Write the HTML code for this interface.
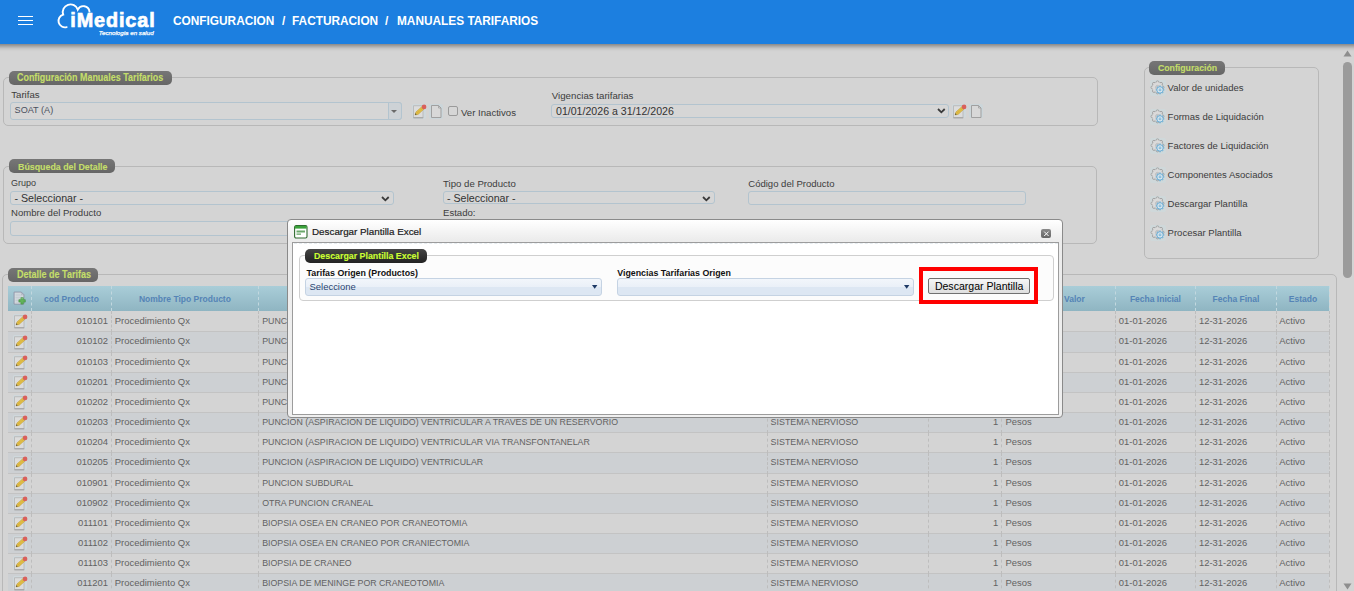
<!DOCTYPE html>
<html><head><meta charset="utf-8"><title>Manuales Tarifarios</title><style>
html,body{margin:0;padding:0;}
body{width:1354px;height:591px;overflow:hidden;position:relative;background:#d4d4d4;font-family:"Liberation Sans", sans-serif;}
.t{position:absolute;line-height:1;white-space:pre;}
.b{position:absolute;box-sizing:border-box;}
svg.b{overflow:visible;}
</style></head>
<body>
<div class="b" style="left:3.30px;top:77.40px;width:1094.50px;height:48.40px;border:1px solid #b8b8b8;border-radius:5px;"></div>
<div class="b" style="left:9.00px;top:71.00px;width:163.00px;height:14.00px;background:linear-gradient(#767676,#666666);border-radius:5px;"></div>
<div class="t" style="left:17.40px;top:72.83px;font-size:10.01px;color:#c4de6a;font-weight:bold;transform:scaleX(0.893);transform-origin:0 0;-webkit-text-stroke:0.15px #c4de6a;">Configuración Manuales Tarifarios</div>
<div class="t" style="left:11.30px;top:90.47px;font-size:9.6px;color:#3c3c3c;font-weight:normal;">Tarifas</div>
<div class="b" style="left:10.20px;top:102.20px;width:391.40px;height:17.40px;border:1px solid #b3c4cf;border-radius:3px;background:#d6d6d6;"></div>
<div class="b" style="left:387.70px;top:102.20px;width:13.90px;height:17.40px;border:1px solid #b3c4cf;border-radius:0 3px 3px 0;background:#cdd2d6;"></div>
<div class="b" style="left:391.2px;top:109.6px;width:0;height:0;border-left:3.6px solid transparent;border-right:3.6px solid transparent;border-top:3.6px solid #6a6a6a;"></div>
<div class="t" style="left:14.60px;top:106.20px;font-size:9.1px;color:#4a5060;font-weight:normal;">SOAT (A)</div>
<div class="b" style="left:411.5px;top:104px;width:14.5px;height:14.5px;background:#cfd8dc;border-radius:2px;"></div><svg class="b" style="left:411.5px;top:104px" width="15" height="15" viewBox="0 0 15 15"><rect x="1.6" y="1.8" width="9.4" height="11.8" fill="#dcdcdc" stroke="#b4b4b4" stroke-width="0.8"/><path d="M1.4 13.9 H11.2" stroke="#9c9c9c" stroke-width="0.9"/><path d="M3.1 10.9 L3.93 8.01 L10.93 1.71 L13.07 4.09 L6.07 10.39 Z" fill="#e2bf48" stroke="#b8962e" stroke-width="0.5"/><path d="M5 9.2 L12 2.9" stroke="#c49a2a" stroke-width="0.6" stroke-dasharray="1 0.8"/><path d="M3.1 10.9 L3.55 9.35 L4.65 10.35 Z" fill="#333"/><circle cx="12.1" cy="2.9" r="2.3" fill="#d9605c"/></svg>
<div class="b" style="left:428.5px;top:104px;width:14.5px;height:14.5px;background:#ccd6da;border-radius:2px;"></div><svg class="b" style="left:428.5px;top:104px" width="15" height="15" viewBox="0 0 15 15"><path d="M2.5 1.5 H9.5 L12 4 V13.5 H2.5 Z" fill="#d8d8d8" stroke="#a0a0a0" stroke-width="1"/><path d="M9.5 1.5 V4 H12" fill="none" stroke="#a0a0a0" stroke-width="0.8"/></svg>
<div class="b" style="left:448.00px;top:106.00px;width:9.60px;height:9.80px;border:1px solid #9a9a9a;border-radius:2px;background:#d6d6d6;"></div>
<div class="t" style="left:461.00px;top:107.87px;font-size:9.6px;color:#3c3c3c;font-weight:normal;">Ver Inactivos</div>
<div class="t" style="left:551.80px;top:90.69px;font-size:9.7px;color:#3c3c3c;font-weight:normal;">Vigencias tarifarias</div>
<div class="b" style="left:551.20px;top:104.20px;width:398.30px;height:13.70px;border:1px solid #b3c4cf;border-radius:3px;background:#d6d6d6;"></div>
<div class="t" style="left:556.00px;top:105.93px;font-size:10.6px;color:#333333;font-weight:normal;">01/01/2026 a 31/12/2026</div>
<svg class="b" style="left:936.7px;top:108.3px" width="8.7" height="5"><path d="M1 1 L4.35 4.3 L7.699999999999999 1" fill="none" stroke="#3a3a3a" stroke-width="1.8"/></svg>
<div class="b" style="left:951.5px;top:103.5px;width:14.5px;height:14.5px;background:#cfd8dc;border-radius:2px;"></div><svg class="b" style="left:951.5px;top:103.5px" width="15" height="15" viewBox="0 0 15 15"><rect x="1.6" y="1.8" width="9.4" height="11.8" fill="#dcdcdc" stroke="#b4b4b4" stroke-width="0.8"/><path d="M1.4 13.9 H11.2" stroke="#9c9c9c" stroke-width="0.9"/><path d="M3.1 10.9 L3.93 8.01 L10.93 1.71 L13.07 4.09 L6.07 10.39 Z" fill="#e2bf48" stroke="#b8962e" stroke-width="0.5"/><path d="M5 9.2 L12 2.9" stroke="#c49a2a" stroke-width="0.6" stroke-dasharray="1 0.8"/><path d="M3.1 10.9 L3.55 9.35 L4.65 10.35 Z" fill="#333"/><circle cx="12.1" cy="2.9" r="2.3" fill="#d9605c"/></svg>
<div class="b" style="left:968.5px;top:103.5px;width:14.5px;height:14.5px;background:#ccd6da;border-radius:2px;"></div><svg class="b" style="left:968.5px;top:103.5px" width="15" height="15" viewBox="0 0 15 15"><path d="M2.5 1.5 H9.5 L12 4 V13.5 H2.5 Z" fill="#d8d8d8" stroke="#a0a0a0" stroke-width="1"/><path d="M9.5 1.5 V4 H12" fill="none" stroke="#a0a0a0" stroke-width="0.8"/></svg>
<div class="b" style="left:3.40px;top:166.40px;width:1094.00px;height:77.60px;border:1px solid #b8b8b8;border-radius:5px;"></div>
<div class="b" style="left:9.30px;top:159.30px;width:105.70px;height:13.50px;background:linear-gradient(#767676,#666666);border-radius:5px;"></div>
<div class="t" style="left:17.80px;top:161.60px;font-size:9.92px;color:#c4de6a;font-weight:bold;transform:scaleX(0.893);transform-origin:0 0;-webkit-text-stroke:0.15px #c4de6a;">Búsqueda del Detalle</div>
<div class="t" style="left:11.00px;top:179.28px;font-size:9.0px;color:#3c3c3c;font-weight:normal;">Grupo</div>
<div class="b" style="left:10.20px;top:191.10px;width:383.60px;height:13.60px;border:1px solid #b3c4cf;border-radius:3px;background:#d6d6d6;"></div>
<div class="t" style="left:14.40px;top:192.57px;font-size:10.67px;color:#333333;font-weight:normal;">- Seleccionar -</div>
<svg class="b" style="left:380.6px;top:195.5px" width="8.7" height="5"><path d="M1 1 L4.35 4.3 L7.699999999999999 1" fill="none" stroke="#3a3a3a" stroke-width="1.8"/></svg>
<div class="t" style="left:11.00px;top:207.92px;font-size:9.55px;color:#3c3c3c;font-weight:normal;">Nombre del Producto</div>
<div class="b" style="left:10.20px;top:221.40px;width:389.80px;height:14.20px;border:1px solid #b3c4cf;border-radius:3px;background:#d6d6d6;"></div>
<div class="t" style="left:443.10px;top:179.27px;font-size:9.6px;color:#3c3c3c;font-weight:normal;">Tipo de Producto</div>
<div class="b" style="left:443.40px;top:191.30px;width:271.90px;height:13.20px;border:1px solid #b3c4cf;border-radius:3px;background:#d6d6d6;"></div>
<div class="t" style="left:446.90px;top:192.57px;font-size:10.67px;color:#333333;font-weight:normal;">- Seleccionar -</div>
<svg class="b" style="left:702px;top:195.5px" width="8.7" height="5"><path d="M1 1 L4.35 4.3 L7.699999999999999 1" fill="none" stroke="#3a3a3a" stroke-width="1.8"/></svg>
<div class="t" style="left:443.00px;top:207.77px;font-size:9.6px;color:#3c3c3c;font-weight:normal;">Estado:</div>
<div class="t" style="left:748.30px;top:179.14px;font-size:9.52px;color:#3c3c3c;font-weight:normal;">Código del Producto</div>
<div class="b" style="left:748.30px;top:190.60px;width:278.00px;height:14.60px;border:1px solid #b3c4cf;border-radius:3px;background:#d6d6d6;"></div>
<div class="b" style="left:1143.50px;top:67.40px;width:175.30px;height:191.20px;border:1px solid #b8b8b8;border-radius:5px;"></div>
<div class="b" style="left:1149.10px;top:61.30px;width:75.70px;height:13.50px;background:linear-gradient(#767676,#666666);border-radius:5px;"></div>
<div class="t" style="left:1157.60px;top:63.12px;font-size:9.78px;color:#c4de6a;font-weight:bold;transform:scaleX(0.893);transform-origin:0 0;-webkit-text-stroke:0.15px #c4de6a;">Configuración</div>
<div class="b" style="left:1150.3px;top:80.4px;width:15.5px;height:15.5px;background:#cfd8da;border-radius:2px;"></div><svg class="b" style="left:1150.3px;top:80.4px" width="16" height="16" viewBox="0 0 16 16"><g fill="#dadada" stroke="#989898" stroke-width="0.8"><circle cx="12.50" cy="7.40" r="1.5"/><circle cx="11.04" cy="10.94" r="1.5"/><circle cx="7.50" cy="12.40" r="1.5"/><circle cx="3.96" cy="10.94" r="1.5"/><circle cx="2.50" cy="7.40" r="1.5"/><circle cx="3.96" cy="3.86" r="1.5"/><circle cx="7.50" cy="2.40" r="1.5"/><circle cx="11.04" cy="3.86" r="1.5"/></g><circle cx="7.5" cy="7.4" r="4.9" fill="#dadada"/><circle cx="7.5" cy="7.4" r="2" fill="#d0d0d0" stroke="#b0b0b0" stroke-width="0.6"/><g stroke="#6eaed4" stroke-width="1.4"><line x1="10" y1="5.6" x2="10" y2="6.9" transform="rotate(0 10 9.9)"/><line x1="10" y1="5.6" x2="10" y2="6.9" transform="rotate(45 10 9.9)"/><line x1="10" y1="5.6" x2="10" y2="6.9" transform="rotate(90 10 9.9)"/><line x1="10" y1="5.6" x2="10" y2="6.9" transform="rotate(135 10 9.9)"/><line x1="10" y1="5.6" x2="10" y2="6.9" transform="rotate(180 10 9.9)"/><line x1="10" y1="5.6" x2="10" y2="6.9" transform="rotate(225 10 9.9)"/><line x1="10" y1="5.6" x2="10" y2="6.9" transform="rotate(270 10 9.9)"/><line x1="10" y1="5.6" x2="10" y2="6.9" transform="rotate(315 10 9.9)"/></g><circle cx="10" cy="9.9" r="3.2" fill="#dfeaf0" stroke="#6eaed4" stroke-width="1"/><rect x="9.1" y="9" width="1.8" height="1.8" fill="none" stroke="#6eaed4" stroke-width="0.7"/></svg>
<div class="t" style="left:1167.60px;top:82.94px;font-size:9.52px;color:#3c3c3c;font-weight:normal;">Valor de unidades</div>
<div class="b" style="left:1150.3px;top:109.4px;width:15.5px;height:15.5px;background:#cfd8da;border-radius:2px;"></div><svg class="b" style="left:1150.3px;top:109.4px" width="16" height="16" viewBox="0 0 16 16"><g fill="#dadada" stroke="#989898" stroke-width="0.8"><circle cx="12.50" cy="7.40" r="1.5"/><circle cx="11.04" cy="10.94" r="1.5"/><circle cx="7.50" cy="12.40" r="1.5"/><circle cx="3.96" cy="10.94" r="1.5"/><circle cx="2.50" cy="7.40" r="1.5"/><circle cx="3.96" cy="3.86" r="1.5"/><circle cx="7.50" cy="2.40" r="1.5"/><circle cx="11.04" cy="3.86" r="1.5"/></g><circle cx="7.5" cy="7.4" r="4.9" fill="#dadada"/><circle cx="7.5" cy="7.4" r="2" fill="#d0d0d0" stroke="#b0b0b0" stroke-width="0.6"/><g stroke="#6eaed4" stroke-width="1.4"><line x1="10" y1="5.6" x2="10" y2="6.9" transform="rotate(0 10 9.9)"/><line x1="10" y1="5.6" x2="10" y2="6.9" transform="rotate(45 10 9.9)"/><line x1="10" y1="5.6" x2="10" y2="6.9" transform="rotate(90 10 9.9)"/><line x1="10" y1="5.6" x2="10" y2="6.9" transform="rotate(135 10 9.9)"/><line x1="10" y1="5.6" x2="10" y2="6.9" transform="rotate(180 10 9.9)"/><line x1="10" y1="5.6" x2="10" y2="6.9" transform="rotate(225 10 9.9)"/><line x1="10" y1="5.6" x2="10" y2="6.9" transform="rotate(270 10 9.9)"/><line x1="10" y1="5.6" x2="10" y2="6.9" transform="rotate(315 10 9.9)"/></g><circle cx="10" cy="9.9" r="3.2" fill="#dfeaf0" stroke="#6eaed4" stroke-width="1"/><rect x="9.1" y="9" width="1.8" height="1.8" fill="none" stroke="#6eaed4" stroke-width="0.7"/></svg>
<div class="t" style="left:1167.60px;top:111.94px;font-size:9.52px;color:#3c3c3c;font-weight:normal;">Formas de Liquidación</div>
<div class="b" style="left:1150.3px;top:138.4px;width:15.5px;height:15.5px;background:#cfd8da;border-radius:2px;"></div><svg class="b" style="left:1150.3px;top:138.4px" width="16" height="16" viewBox="0 0 16 16"><g fill="#dadada" stroke="#989898" stroke-width="0.8"><circle cx="12.50" cy="7.40" r="1.5"/><circle cx="11.04" cy="10.94" r="1.5"/><circle cx="7.50" cy="12.40" r="1.5"/><circle cx="3.96" cy="10.94" r="1.5"/><circle cx="2.50" cy="7.40" r="1.5"/><circle cx="3.96" cy="3.86" r="1.5"/><circle cx="7.50" cy="2.40" r="1.5"/><circle cx="11.04" cy="3.86" r="1.5"/></g><circle cx="7.5" cy="7.4" r="4.9" fill="#dadada"/><circle cx="7.5" cy="7.4" r="2" fill="#d0d0d0" stroke="#b0b0b0" stroke-width="0.6"/><g stroke="#6eaed4" stroke-width="1.4"><line x1="10" y1="5.6" x2="10" y2="6.9" transform="rotate(0 10 9.9)"/><line x1="10" y1="5.6" x2="10" y2="6.9" transform="rotate(45 10 9.9)"/><line x1="10" y1="5.6" x2="10" y2="6.9" transform="rotate(90 10 9.9)"/><line x1="10" y1="5.6" x2="10" y2="6.9" transform="rotate(135 10 9.9)"/><line x1="10" y1="5.6" x2="10" y2="6.9" transform="rotate(180 10 9.9)"/><line x1="10" y1="5.6" x2="10" y2="6.9" transform="rotate(225 10 9.9)"/><line x1="10" y1="5.6" x2="10" y2="6.9" transform="rotate(270 10 9.9)"/><line x1="10" y1="5.6" x2="10" y2="6.9" transform="rotate(315 10 9.9)"/></g><circle cx="10" cy="9.9" r="3.2" fill="#dfeaf0" stroke="#6eaed4" stroke-width="1"/><rect x="9.1" y="9" width="1.8" height="1.8" fill="none" stroke="#6eaed4" stroke-width="0.7"/></svg>
<div class="t" style="left:1167.60px;top:140.94px;font-size:9.52px;color:#3c3c3c;font-weight:normal;">Factores de Liquidación</div>
<div class="b" style="left:1150.3px;top:167.4px;width:15.5px;height:15.5px;background:#cfd8da;border-radius:2px;"></div><svg class="b" style="left:1150.3px;top:167.4px" width="16" height="16" viewBox="0 0 16 16"><g fill="#dadada" stroke="#989898" stroke-width="0.8"><circle cx="12.50" cy="7.40" r="1.5"/><circle cx="11.04" cy="10.94" r="1.5"/><circle cx="7.50" cy="12.40" r="1.5"/><circle cx="3.96" cy="10.94" r="1.5"/><circle cx="2.50" cy="7.40" r="1.5"/><circle cx="3.96" cy="3.86" r="1.5"/><circle cx="7.50" cy="2.40" r="1.5"/><circle cx="11.04" cy="3.86" r="1.5"/></g><circle cx="7.5" cy="7.4" r="4.9" fill="#dadada"/><circle cx="7.5" cy="7.4" r="2" fill="#d0d0d0" stroke="#b0b0b0" stroke-width="0.6"/><g stroke="#6eaed4" stroke-width="1.4"><line x1="10" y1="5.6" x2="10" y2="6.9" transform="rotate(0 10 9.9)"/><line x1="10" y1="5.6" x2="10" y2="6.9" transform="rotate(45 10 9.9)"/><line x1="10" y1="5.6" x2="10" y2="6.9" transform="rotate(90 10 9.9)"/><line x1="10" y1="5.6" x2="10" y2="6.9" transform="rotate(135 10 9.9)"/><line x1="10" y1="5.6" x2="10" y2="6.9" transform="rotate(180 10 9.9)"/><line x1="10" y1="5.6" x2="10" y2="6.9" transform="rotate(225 10 9.9)"/><line x1="10" y1="5.6" x2="10" y2="6.9" transform="rotate(270 10 9.9)"/><line x1="10" y1="5.6" x2="10" y2="6.9" transform="rotate(315 10 9.9)"/></g><circle cx="10" cy="9.9" r="3.2" fill="#dfeaf0" stroke="#6eaed4" stroke-width="1"/><rect x="9.1" y="9" width="1.8" height="1.8" fill="none" stroke="#6eaed4" stroke-width="0.7"/></svg>
<div class="t" style="left:1167.60px;top:169.94px;font-size:9.52px;color:#3c3c3c;font-weight:normal;">Componentes Asociados</div>
<div class="b" style="left:1150.3px;top:196.4px;width:15.5px;height:15.5px;background:#cfd8da;border-radius:2px;"></div><svg class="b" style="left:1150.3px;top:196.4px" width="16" height="16" viewBox="0 0 16 16"><g fill="#dadada" stroke="#989898" stroke-width="0.8"><circle cx="12.50" cy="7.40" r="1.5"/><circle cx="11.04" cy="10.94" r="1.5"/><circle cx="7.50" cy="12.40" r="1.5"/><circle cx="3.96" cy="10.94" r="1.5"/><circle cx="2.50" cy="7.40" r="1.5"/><circle cx="3.96" cy="3.86" r="1.5"/><circle cx="7.50" cy="2.40" r="1.5"/><circle cx="11.04" cy="3.86" r="1.5"/></g><circle cx="7.5" cy="7.4" r="4.9" fill="#dadada"/><circle cx="7.5" cy="7.4" r="2" fill="#d0d0d0" stroke="#b0b0b0" stroke-width="0.6"/><g stroke="#6eaed4" stroke-width="1.4"><line x1="10" y1="5.6" x2="10" y2="6.9" transform="rotate(0 10 9.9)"/><line x1="10" y1="5.6" x2="10" y2="6.9" transform="rotate(45 10 9.9)"/><line x1="10" y1="5.6" x2="10" y2="6.9" transform="rotate(90 10 9.9)"/><line x1="10" y1="5.6" x2="10" y2="6.9" transform="rotate(135 10 9.9)"/><line x1="10" y1="5.6" x2="10" y2="6.9" transform="rotate(180 10 9.9)"/><line x1="10" y1="5.6" x2="10" y2="6.9" transform="rotate(225 10 9.9)"/><line x1="10" y1="5.6" x2="10" y2="6.9" transform="rotate(270 10 9.9)"/><line x1="10" y1="5.6" x2="10" y2="6.9" transform="rotate(315 10 9.9)"/></g><circle cx="10" cy="9.9" r="3.2" fill="#dfeaf0" stroke="#6eaed4" stroke-width="1"/><rect x="9.1" y="9" width="1.8" height="1.8" fill="none" stroke="#6eaed4" stroke-width="0.7"/></svg>
<div class="t" style="left:1167.60px;top:198.94px;font-size:9.52px;color:#3c3c3c;font-weight:normal;">Descargar Plantilla</div>
<div class="b" style="left:1150.3px;top:225.4px;width:15.5px;height:15.5px;background:#cfd8da;border-radius:2px;"></div><svg class="b" style="left:1150.3px;top:225.4px" width="16" height="16" viewBox="0 0 16 16"><g fill="#dadada" stroke="#989898" stroke-width="0.8"><circle cx="12.50" cy="7.40" r="1.5"/><circle cx="11.04" cy="10.94" r="1.5"/><circle cx="7.50" cy="12.40" r="1.5"/><circle cx="3.96" cy="10.94" r="1.5"/><circle cx="2.50" cy="7.40" r="1.5"/><circle cx="3.96" cy="3.86" r="1.5"/><circle cx="7.50" cy="2.40" r="1.5"/><circle cx="11.04" cy="3.86" r="1.5"/></g><circle cx="7.5" cy="7.4" r="4.9" fill="#dadada"/><circle cx="7.5" cy="7.4" r="2" fill="#d0d0d0" stroke="#b0b0b0" stroke-width="0.6"/><g stroke="#6eaed4" stroke-width="1.4"><line x1="10" y1="5.6" x2="10" y2="6.9" transform="rotate(0 10 9.9)"/><line x1="10" y1="5.6" x2="10" y2="6.9" transform="rotate(45 10 9.9)"/><line x1="10" y1="5.6" x2="10" y2="6.9" transform="rotate(90 10 9.9)"/><line x1="10" y1="5.6" x2="10" y2="6.9" transform="rotate(135 10 9.9)"/><line x1="10" y1="5.6" x2="10" y2="6.9" transform="rotate(180 10 9.9)"/><line x1="10" y1="5.6" x2="10" y2="6.9" transform="rotate(225 10 9.9)"/><line x1="10" y1="5.6" x2="10" y2="6.9" transform="rotate(270 10 9.9)"/><line x1="10" y1="5.6" x2="10" y2="6.9" transform="rotate(315 10 9.9)"/></g><circle cx="10" cy="9.9" r="3.2" fill="#dfeaf0" stroke="#6eaed4" stroke-width="1"/><rect x="9.1" y="9" width="1.8" height="1.8" fill="none" stroke="#6eaed4" stroke-width="0.7"/></svg>
<div class="t" style="left:1167.60px;top:227.94px;font-size:9.52px;color:#3c3c3c;font-weight:normal;">Procesar Plantilla</div>
<div class="b" style="left:2.30px;top:273.80px;width:1334.50px;height:426.20px;border:1px solid #b8b8b8;border-radius:5px;"></div>
<div class="b" style="left:7.90px;top:268.40px;width:89.90px;height:13.20px;background:linear-gradient(#767676,#666666);border-radius:5px;"></div>
<div class="t" style="left:16.50px;top:270.04px;font-size:10.11px;color:#c4de6a;font-weight:bold;transform:scaleX(0.893);transform-origin:0 0;-webkit-text-stroke:0.15px #c4de6a;">Detalle de Tarifas</div>
<div class="b" style="left:7.90px;top:285.80px;width:1321.50px;height:24.90px;background:linear-gradient(#a9cdd8,#8fb5c2);"></div>
<div class="b" style="left:31.00px;top:285.80px;width:1.00px;height:25.10px;border-left:1px dashed #c2d8df;"></div>
<div class="b" style="left:110.90px;top:285.80px;width:1.00px;height:25.10px;border-left:1px dashed #c2d8df;"></div>
<div class="b" style="left:258.00px;top:285.80px;width:1.00px;height:25.10px;border-left:1px dashed #c2d8df;"></div>
<div class="b" style="left:767.20px;top:285.80px;width:1.00px;height:25.10px;border-left:1px dashed #c2d8df;"></div>
<div class="b" style="left:927.80px;top:285.80px;width:1.00px;height:25.10px;border-left:1px dashed #c2d8df;"></div>
<div class="b" style="left:1001.00px;top:285.80px;width:1.00px;height:25.10px;border-left:1px dashed #c2d8df;"></div>
<div class="b" style="left:1115.00px;top:285.80px;width:1.00px;height:25.10px;border-left:1px dashed #c2d8df;"></div>
<div class="b" style="left:1194.90px;top:285.80px;width:1.00px;height:25.10px;border-left:1px dashed #c2d8df;"></div>
<div class="b" style="left:1276.00px;top:285.80px;width:1.00px;height:25.10px;border-left:1px dashed #c2d8df;"></div>
<div class="b" style="left:1328.90px;top:285.80px;width:1.00px;height:25.10px;border-left:1px dashed #c2d8df;"></div>
<div class="t" style="left:31.50px;width:79.90px;top:294.70px;font-size:8.5px;color:#5584b6;font-weight:bold;text-align:center">cod Producto</div>
<div class="t" style="left:111.40px;width:147.10px;top:294.70px;font-size:8.5px;color:#5584b6;font-weight:bold;text-align:center">Nombre Tipo Producto</div>
<div class="t" style="left:258.50px;width:509.20px;top:294.70px;font-size:8.5px;color:#5584b6;font-weight:bold;text-align:center">Nombre Producto</div>
<div class="t" style="left:767.70px;width:160.60px;top:294.70px;font-size:8.5px;color:#5584b6;font-weight:bold;text-align:center">Grupo</div>
<div class="t" style="left:928.30px;width:73.20px;top:294.70px;font-size:8.5px;color:#5584b6;font-weight:bold;text-align:center">Unidades</div>
<div class="t" style="left:950.00px;width:134.80px;top:294.70px;font-size:8.5px;color:#5584b6;font-weight:bold;text-align:right">Tipo Valor</div>
<div class="t" style="left:1115.50px;width:79.90px;top:294.70px;font-size:8.5px;color:#5584b6;font-weight:bold;text-align:center">Fecha Inicial</div>
<div class="t" style="left:1195.40px;width:81.10px;top:294.70px;font-size:8.5px;color:#5584b6;font-weight:bold;text-align:center">Fecha Final</div>
<div class="t" style="left:1276.50px;width:52.90px;top:294.70px;font-size:8.5px;color:#5584b6;font-weight:bold;text-align:center">Estado</div>
<svg class="b" style="left:12.9px;top:290.9px" width="15" height="15" viewBox="0 0 15 15"><path d="M1.1 1.1 H8.3 L10.9 3.7 V13.1 H1.1 Z" fill="#d8dfe2" stroke="#8e93a6" stroke-width="0.9"/><path d="M8.3 1.1 V3.7 H10.9" fill="none" stroke="#9aa0b0" stroke-width="0.6"/><g stroke="#b6bcc8" stroke-width="0.6"><line x1="2.4" y1="3.2" x2="7.5" y2="3.2"/><line x1="2.4" y1="4.8" x2="9.5" y2="4.8"/><line x1="2.4" y1="6.4" x2="9.5" y2="6.4"/><line x1="2.4" y1="8" x2="7" y2="8"/><line x1="2.4" y1="9.6" x2="6" y2="9.6"/><line x1="2.4" y1="11.2" x2="6" y2="11.2"/></g><path d="M7.9 6.7 H10.3 V8.7 H12.3 V11.1 H10.3 V13.1 H7.9 V11.1 H5.9 V8.7 H7.9 Z" fill="#62b35a" stroke="#3f8f3f" stroke-width="0.6"/><path d="M8.5 7.5 H9.7" stroke="#a8dca0" stroke-width="0.6"/></svg>
<div class="b" style="left:7.90px;top:310.70px;width:1321.50px;height:21.30px;background:#d4d4d4;border-bottom:1px solid #c3c3c3;"></div>
<div class="b" style="left:31.00px;top:310.70px;width:1.00px;height:21.30px;border-left:1px dashed #bdbdbd;"></div>
<div class="b" style="left:110.90px;top:310.70px;width:1.00px;height:21.30px;border-left:1px dashed #bdbdbd;"></div>
<div class="b" style="left:258.00px;top:310.70px;width:1.00px;height:21.30px;border-left:1px dashed #bdbdbd;"></div>
<div class="b" style="left:767.20px;top:310.70px;width:1.00px;height:21.30px;border-left:1px dashed #bdbdbd;"></div>
<div class="b" style="left:927.80px;top:310.70px;width:1.00px;height:21.30px;border-left:1px dashed #bdbdbd;"></div>
<div class="b" style="left:1001.00px;top:310.70px;width:1.00px;height:21.30px;border-left:1px dashed #bdbdbd;"></div>
<div class="b" style="left:1115.00px;top:310.70px;width:1.00px;height:21.30px;border-left:1px dashed #bdbdbd;"></div>
<div class="b" style="left:1194.90px;top:310.70px;width:1.00px;height:21.30px;border-left:1px dashed #bdbdbd;"></div>
<div class="b" style="left:1276.00px;top:310.70px;width:1.00px;height:21.30px;border-left:1px dashed #bdbdbd;"></div>
<div class="b" style="left:1328.90px;top:310.70px;width:1.00px;height:21.30px;border-left:1px dashed #bdbdbd;"></div>
<div class="b" style="left:12.6px;top:313.7px;width:14.5px;height:14.5px;background:#cfd8dc;border-radius:2px;"></div><svg class="b" style="left:12.6px;top:313.7px" width="15" height="15" viewBox="0 0 15 15"><rect x="1.6" y="1.8" width="9.4" height="11.8" fill="#dcdcdc" stroke="#b4b4b4" stroke-width="0.8"/><path d="M1.4 13.9 H11.2" stroke="#9c9c9c" stroke-width="0.9"/><path d="M3.1 10.9 L3.93 8.01 L10.93 1.71 L13.07 4.09 L6.07 10.39 Z" fill="#e2bf48" stroke="#b8962e" stroke-width="0.5"/><path d="M5 9.2 L12 2.9" stroke="#c49a2a" stroke-width="0.6" stroke-dasharray="1 0.8"/><path d="M3.1 10.9 L3.55 9.35 L4.65 10.35 Z" fill="#333"/><circle cx="12.1" cy="2.9" r="2.3" fill="#d9605c"/></svg>
<div class="t" style="left:31.50px;width:76.50px;top:316.10px;font-size:9.45px;color:#626262;font-weight:normal;text-align:right">010101</div>
<div class="t" style="left:114.80px;top:316.09px;font-size:9.46px;color:#626262;font-weight:normal;">Procedimiento Qx</div>
<div class="t" style="left:262.20px;top:316.65px;font-size:8.8px;color:#626262;font-weight:normal;">PUNCION CISTERNAL</div>
<div class="t" style="left:770.60px;top:316.57px;font-size:8.9px;color:#626262;font-weight:normal;">SISTEMA NERVIOSO</div>
<div class="t" style="left:928.30px;width:70.00px;top:316.10px;font-size:9.45px;color:#626262;font-weight:normal;text-align:right">1</div>
<div class="t" style="left:1005.50px;top:316.10px;font-size:9.45px;color:#626262;font-weight:normal;">Pesos</div>
<div class="t" style="left:1118.80px;top:316.10px;font-size:9.45px;color:#626262;font-weight:normal;">01-01-2026</div>
<div class="t" style="left:1198.90px;top:316.10px;font-size:9.45px;color:#626262;font-weight:normal;">12-31-2026</div>
<div class="t" style="left:1279.30px;top:316.10px;font-size:9.45px;color:#626262;font-weight:normal;">Activo</div>
<div class="b" style="left:7.90px;top:332.00px;width:1321.50px;height:21.00px;background:#cdd0d3;border-bottom:1px solid #c3c3c3;"></div>
<div class="b" style="left:31.00px;top:332.00px;width:1.00px;height:21.00px;border-left:1px dashed #bdbdbd;"></div>
<div class="b" style="left:110.90px;top:332.00px;width:1.00px;height:21.00px;border-left:1px dashed #bdbdbd;"></div>
<div class="b" style="left:258.00px;top:332.00px;width:1.00px;height:21.00px;border-left:1px dashed #bdbdbd;"></div>
<div class="b" style="left:767.20px;top:332.00px;width:1.00px;height:21.00px;border-left:1px dashed #bdbdbd;"></div>
<div class="b" style="left:927.80px;top:332.00px;width:1.00px;height:21.00px;border-left:1px dashed #bdbdbd;"></div>
<div class="b" style="left:1001.00px;top:332.00px;width:1.00px;height:21.00px;border-left:1px dashed #bdbdbd;"></div>
<div class="b" style="left:1115.00px;top:332.00px;width:1.00px;height:21.00px;border-left:1px dashed #bdbdbd;"></div>
<div class="b" style="left:1194.90px;top:332.00px;width:1.00px;height:21.00px;border-left:1px dashed #bdbdbd;"></div>
<div class="b" style="left:1276.00px;top:332.00px;width:1.00px;height:21.00px;border-left:1px dashed #bdbdbd;"></div>
<div class="b" style="left:1328.90px;top:332.00px;width:1.00px;height:21.00px;border-left:1px dashed #bdbdbd;"></div>
<div class="b" style="left:12.6px;top:334.7px;width:14.5px;height:14.5px;background:#cfd8dc;border-radius:2px;"></div><svg class="b" style="left:12.6px;top:334.7px" width="15" height="15" viewBox="0 0 15 15"><rect x="1.6" y="1.8" width="9.4" height="11.8" fill="#dcdcdc" stroke="#b4b4b4" stroke-width="0.8"/><path d="M1.4 13.9 H11.2" stroke="#9c9c9c" stroke-width="0.9"/><path d="M3.1 10.9 L3.93 8.01 L10.93 1.71 L13.07 4.09 L6.07 10.39 Z" fill="#e2bf48" stroke="#b8962e" stroke-width="0.5"/><path d="M5 9.2 L12 2.9" stroke="#c49a2a" stroke-width="0.6" stroke-dasharray="1 0.8"/><path d="M3.1 10.9 L3.55 9.35 L4.65 10.35 Z" fill="#333"/><circle cx="12.1" cy="2.9" r="2.3" fill="#d9605c"/></svg>
<div class="t" style="left:31.50px;width:76.50px;top:336.10px;font-size:9.45px;color:#626262;font-weight:normal;text-align:right">010102</div>
<div class="t" style="left:114.80px;top:336.09px;font-size:9.46px;color:#626262;font-weight:normal;">Procedimiento Qx</div>
<div class="t" style="left:262.20px;top:336.65px;font-size:8.8px;color:#626262;font-weight:normal;">PUNCION VENTRICULAR A TRAVES DE CATETER PERMANENTE</div>
<div class="t" style="left:770.60px;top:336.57px;font-size:8.9px;color:#626262;font-weight:normal;">SISTEMA NERVIOSO</div>
<div class="t" style="left:928.30px;width:70.00px;top:336.10px;font-size:9.45px;color:#626262;font-weight:normal;text-align:right">1</div>
<div class="t" style="left:1005.50px;top:336.10px;font-size:9.45px;color:#626262;font-weight:normal;">Pesos</div>
<div class="t" style="left:1118.80px;top:336.10px;font-size:9.45px;color:#626262;font-weight:normal;">01-01-2026</div>
<div class="t" style="left:1198.90px;top:336.10px;font-size:9.45px;color:#626262;font-weight:normal;">12-31-2026</div>
<div class="t" style="left:1279.30px;top:336.10px;font-size:9.45px;color:#626262;font-weight:normal;">Activo</div>
<div class="b" style="left:7.90px;top:353.00px;width:1321.50px;height:20.00px;background:#d4d4d4;border-bottom:1px solid #c3c3c3;"></div>
<div class="b" style="left:31.00px;top:353.00px;width:1.00px;height:20.00px;border-left:1px dashed #bdbdbd;"></div>
<div class="b" style="left:110.90px;top:353.00px;width:1.00px;height:20.00px;border-left:1px dashed #bdbdbd;"></div>
<div class="b" style="left:258.00px;top:353.00px;width:1.00px;height:20.00px;border-left:1px dashed #bdbdbd;"></div>
<div class="b" style="left:767.20px;top:353.00px;width:1.00px;height:20.00px;border-left:1px dashed #bdbdbd;"></div>
<div class="b" style="left:927.80px;top:353.00px;width:1.00px;height:20.00px;border-left:1px dashed #bdbdbd;"></div>
<div class="b" style="left:1001.00px;top:353.00px;width:1.00px;height:20.00px;border-left:1px dashed #bdbdbd;"></div>
<div class="b" style="left:1115.00px;top:353.00px;width:1.00px;height:20.00px;border-left:1px dashed #bdbdbd;"></div>
<div class="b" style="left:1194.90px;top:353.00px;width:1.00px;height:20.00px;border-left:1px dashed #bdbdbd;"></div>
<div class="b" style="left:1276.00px;top:353.00px;width:1.00px;height:20.00px;border-left:1px dashed #bdbdbd;"></div>
<div class="b" style="left:1328.90px;top:353.00px;width:1.00px;height:20.00px;border-left:1px dashed #bdbdbd;"></div>
<div class="b" style="left:12.6px;top:354.7px;width:14.5px;height:14.5px;background:#cfd8dc;border-radius:2px;"></div><svg class="b" style="left:12.6px;top:354.7px" width="15" height="15" viewBox="0 0 15 15"><rect x="1.6" y="1.8" width="9.4" height="11.8" fill="#dcdcdc" stroke="#b4b4b4" stroke-width="0.8"/><path d="M1.4 13.9 H11.2" stroke="#9c9c9c" stroke-width="0.9"/><path d="M3.1 10.9 L3.93 8.01 L10.93 1.71 L13.07 4.09 L6.07 10.39 Z" fill="#e2bf48" stroke="#b8962e" stroke-width="0.5"/><path d="M5 9.2 L12 2.9" stroke="#c49a2a" stroke-width="0.6" stroke-dasharray="1 0.8"/><path d="M3.1 10.9 L3.55 9.35 L4.65 10.35 Z" fill="#333"/><circle cx="12.1" cy="2.9" r="2.3" fill="#d9605c"/></svg>
<div class="t" style="left:31.50px;width:76.50px;top:357.10px;font-size:9.45px;color:#626262;font-weight:normal;text-align:right">010103</div>
<div class="t" style="left:114.80px;top:357.09px;font-size:9.46px;color:#626262;font-weight:normal;">Procedimiento Qx</div>
<div class="t" style="left:262.20px;top:357.65px;font-size:8.8px;color:#626262;font-weight:normal;">PUNCION LUMBAR</div>
<div class="t" style="left:770.60px;top:357.57px;font-size:8.9px;color:#626262;font-weight:normal;">SISTEMA NERVIOSO</div>
<div class="t" style="left:928.30px;width:70.00px;top:357.10px;font-size:9.45px;color:#626262;font-weight:normal;text-align:right">1</div>
<div class="t" style="left:1005.50px;top:357.10px;font-size:9.45px;color:#626262;font-weight:normal;">Pesos</div>
<div class="t" style="left:1118.80px;top:357.10px;font-size:9.45px;color:#626262;font-weight:normal;">01-01-2026</div>
<div class="t" style="left:1198.90px;top:357.10px;font-size:9.45px;color:#626262;font-weight:normal;">12-31-2026</div>
<div class="t" style="left:1279.30px;top:357.10px;font-size:9.45px;color:#626262;font-weight:normal;">Activo</div>
<div class="b" style="left:7.90px;top:373.00px;width:1321.50px;height:20.00px;background:#cdd0d3;border-bottom:1px solid #c3c3c3;"></div>
<div class="b" style="left:31.00px;top:373.00px;width:1.00px;height:20.00px;border-left:1px dashed #bdbdbd;"></div>
<div class="b" style="left:110.90px;top:373.00px;width:1.00px;height:20.00px;border-left:1px dashed #bdbdbd;"></div>
<div class="b" style="left:258.00px;top:373.00px;width:1.00px;height:20.00px;border-left:1px dashed #bdbdbd;"></div>
<div class="b" style="left:767.20px;top:373.00px;width:1.00px;height:20.00px;border-left:1px dashed #bdbdbd;"></div>
<div class="b" style="left:927.80px;top:373.00px;width:1.00px;height:20.00px;border-left:1px dashed #bdbdbd;"></div>
<div class="b" style="left:1001.00px;top:373.00px;width:1.00px;height:20.00px;border-left:1px dashed #bdbdbd;"></div>
<div class="b" style="left:1115.00px;top:373.00px;width:1.00px;height:20.00px;border-left:1px dashed #bdbdbd;"></div>
<div class="b" style="left:1194.90px;top:373.00px;width:1.00px;height:20.00px;border-left:1px dashed #bdbdbd;"></div>
<div class="b" style="left:1276.00px;top:373.00px;width:1.00px;height:20.00px;border-left:1px dashed #bdbdbd;"></div>
<div class="b" style="left:1328.90px;top:373.00px;width:1.00px;height:20.00px;border-left:1px dashed #bdbdbd;"></div>
<div class="b" style="left:12.6px;top:374.7px;width:14.5px;height:14.5px;background:#cfd8dc;border-radius:2px;"></div><svg class="b" style="left:12.6px;top:374.7px" width="15" height="15" viewBox="0 0 15 15"><rect x="1.6" y="1.8" width="9.4" height="11.8" fill="#dcdcdc" stroke="#b4b4b4" stroke-width="0.8"/><path d="M1.4 13.9 H11.2" stroke="#9c9c9c" stroke-width="0.9"/><path d="M3.1 10.9 L3.93 8.01 L10.93 1.71 L13.07 4.09 L6.07 10.39 Z" fill="#e2bf48" stroke="#b8962e" stroke-width="0.5"/><path d="M5 9.2 L12 2.9" stroke="#c49a2a" stroke-width="0.6" stroke-dasharray="1 0.8"/><path d="M3.1 10.9 L3.55 9.35 L4.65 10.35 Z" fill="#333"/><circle cx="12.1" cy="2.9" r="2.3" fill="#d9605c"/></svg>
<div class="t" style="left:31.50px;width:76.50px;top:377.10px;font-size:9.45px;color:#626262;font-weight:normal;text-align:right">010201</div>
<div class="t" style="left:114.80px;top:377.09px;font-size:9.46px;color:#626262;font-weight:normal;">Procedimiento Qx</div>
<div class="t" style="left:262.20px;top:377.65px;font-size:8.8px;color:#626262;font-weight:normal;">PUNCION DE FONTANELA</div>
<div class="t" style="left:770.60px;top:377.57px;font-size:8.9px;color:#626262;font-weight:normal;">SISTEMA NERVIOSO</div>
<div class="t" style="left:928.30px;width:70.00px;top:377.10px;font-size:9.45px;color:#626262;font-weight:normal;text-align:right">1</div>
<div class="t" style="left:1005.50px;top:377.10px;font-size:9.45px;color:#626262;font-weight:normal;">Pesos</div>
<div class="t" style="left:1118.80px;top:377.10px;font-size:9.45px;color:#626262;font-weight:normal;">01-01-2026</div>
<div class="t" style="left:1198.90px;top:377.10px;font-size:9.45px;color:#626262;font-weight:normal;">12-31-2026</div>
<div class="t" style="left:1279.30px;top:377.10px;font-size:9.45px;color:#626262;font-weight:normal;">Activo</div>
<div class="b" style="left:7.90px;top:393.00px;width:1321.50px;height:20.00px;background:#d4d4d4;border-bottom:1px solid #c3c3c3;"></div>
<div class="b" style="left:31.00px;top:393.00px;width:1.00px;height:20.00px;border-left:1px dashed #bdbdbd;"></div>
<div class="b" style="left:110.90px;top:393.00px;width:1.00px;height:20.00px;border-left:1px dashed #bdbdbd;"></div>
<div class="b" style="left:258.00px;top:393.00px;width:1.00px;height:20.00px;border-left:1px dashed #bdbdbd;"></div>
<div class="b" style="left:767.20px;top:393.00px;width:1.00px;height:20.00px;border-left:1px dashed #bdbdbd;"></div>
<div class="b" style="left:927.80px;top:393.00px;width:1.00px;height:20.00px;border-left:1px dashed #bdbdbd;"></div>
<div class="b" style="left:1001.00px;top:393.00px;width:1.00px;height:20.00px;border-left:1px dashed #bdbdbd;"></div>
<div class="b" style="left:1115.00px;top:393.00px;width:1.00px;height:20.00px;border-left:1px dashed #bdbdbd;"></div>
<div class="b" style="left:1194.90px;top:393.00px;width:1.00px;height:20.00px;border-left:1px dashed #bdbdbd;"></div>
<div class="b" style="left:1276.00px;top:393.00px;width:1.00px;height:20.00px;border-left:1px dashed #bdbdbd;"></div>
<div class="b" style="left:1328.90px;top:393.00px;width:1.00px;height:20.00px;border-left:1px dashed #bdbdbd;"></div>
<div class="b" style="left:12.6px;top:394.7px;width:14.5px;height:14.5px;background:#cfd8dc;border-radius:2px;"></div><svg class="b" style="left:12.6px;top:394.7px" width="15" height="15" viewBox="0 0 15 15"><rect x="1.6" y="1.8" width="9.4" height="11.8" fill="#dcdcdc" stroke="#b4b4b4" stroke-width="0.8"/><path d="M1.4 13.9 H11.2" stroke="#9c9c9c" stroke-width="0.9"/><path d="M3.1 10.9 L3.93 8.01 L10.93 1.71 L13.07 4.09 L6.07 10.39 Z" fill="#e2bf48" stroke="#b8962e" stroke-width="0.5"/><path d="M5 9.2 L12 2.9" stroke="#c49a2a" stroke-width="0.6" stroke-dasharray="1 0.8"/><path d="M3.1 10.9 L3.55 9.35 L4.65 10.35 Z" fill="#333"/><circle cx="12.1" cy="2.9" r="2.3" fill="#d9605c"/></svg>
<div class="t" style="left:31.50px;width:76.50px;top:397.10px;font-size:9.45px;color:#626262;font-weight:normal;text-align:right">010202</div>
<div class="t" style="left:114.80px;top:397.09px;font-size:9.46px;color:#626262;font-weight:normal;">Procedimiento Qx</div>
<div class="t" style="left:262.20px;top:397.65px;font-size:8.8px;color:#626262;font-weight:normal;">PUNCION SUBOCCIPITAL</div>
<div class="t" style="left:770.60px;top:397.57px;font-size:8.9px;color:#626262;font-weight:normal;">SISTEMA NERVIOSO</div>
<div class="t" style="left:928.30px;width:70.00px;top:397.10px;font-size:9.45px;color:#626262;font-weight:normal;text-align:right">1</div>
<div class="t" style="left:1005.50px;top:397.10px;font-size:9.45px;color:#626262;font-weight:normal;">Pesos</div>
<div class="t" style="left:1118.80px;top:397.10px;font-size:9.45px;color:#626262;font-weight:normal;">01-01-2026</div>
<div class="t" style="left:1198.90px;top:397.10px;font-size:9.45px;color:#626262;font-weight:normal;">12-31-2026</div>
<div class="t" style="left:1279.30px;top:397.10px;font-size:9.45px;color:#626262;font-weight:normal;">Activo</div>
<div class="b" style="left:7.90px;top:413.00px;width:1321.50px;height:20.00px;background:#cdd0d3;border-bottom:1px solid #c3c3c3;"></div>
<div class="b" style="left:31.00px;top:413.00px;width:1.00px;height:20.00px;border-left:1px dashed #bdbdbd;"></div>
<div class="b" style="left:110.90px;top:413.00px;width:1.00px;height:20.00px;border-left:1px dashed #bdbdbd;"></div>
<div class="b" style="left:258.00px;top:413.00px;width:1.00px;height:20.00px;border-left:1px dashed #bdbdbd;"></div>
<div class="b" style="left:767.20px;top:413.00px;width:1.00px;height:20.00px;border-left:1px dashed #bdbdbd;"></div>
<div class="b" style="left:927.80px;top:413.00px;width:1.00px;height:20.00px;border-left:1px dashed #bdbdbd;"></div>
<div class="b" style="left:1001.00px;top:413.00px;width:1.00px;height:20.00px;border-left:1px dashed #bdbdbd;"></div>
<div class="b" style="left:1115.00px;top:413.00px;width:1.00px;height:20.00px;border-left:1px dashed #bdbdbd;"></div>
<div class="b" style="left:1194.90px;top:413.00px;width:1.00px;height:20.00px;border-left:1px dashed #bdbdbd;"></div>
<div class="b" style="left:1276.00px;top:413.00px;width:1.00px;height:20.00px;border-left:1px dashed #bdbdbd;"></div>
<div class="b" style="left:1328.90px;top:413.00px;width:1.00px;height:20.00px;border-left:1px dashed #bdbdbd;"></div>
<div class="b" style="left:12.6px;top:414.7px;width:14.5px;height:14.5px;background:#cfd8dc;border-radius:2px;"></div><svg class="b" style="left:12.6px;top:414.7px" width="15" height="15" viewBox="0 0 15 15"><rect x="1.6" y="1.8" width="9.4" height="11.8" fill="#dcdcdc" stroke="#b4b4b4" stroke-width="0.8"/><path d="M1.4 13.9 H11.2" stroke="#9c9c9c" stroke-width="0.9"/><path d="M3.1 10.9 L3.93 8.01 L10.93 1.71 L13.07 4.09 L6.07 10.39 Z" fill="#e2bf48" stroke="#b8962e" stroke-width="0.5"/><path d="M5 9.2 L12 2.9" stroke="#c49a2a" stroke-width="0.6" stroke-dasharray="1 0.8"/><path d="M3.1 10.9 L3.55 9.35 L4.65 10.35 Z" fill="#333"/><circle cx="12.1" cy="2.9" r="2.3" fill="#d9605c"/></svg>
<div class="t" style="left:31.50px;width:76.50px;top:417.10px;font-size:9.45px;color:#626262;font-weight:normal;text-align:right">010203</div>
<div class="t" style="left:114.80px;top:417.09px;font-size:9.46px;color:#626262;font-weight:normal;">Procedimiento Qx</div>
<div class="t" style="left:262.20px;top:417.65px;font-size:8.8px;color:#626262;font-weight:normal;">PUNCION (ASPIRACION DE LIQUIDO) VENTRICULAR A TRAVES DE UN RESERVORIO</div>
<div class="t" style="left:770.60px;top:417.57px;font-size:8.9px;color:#626262;font-weight:normal;">SISTEMA NERVIOSO</div>
<div class="t" style="left:928.30px;width:70.00px;top:417.10px;font-size:9.45px;color:#626262;font-weight:normal;text-align:right">1</div>
<div class="t" style="left:1005.50px;top:417.10px;font-size:9.45px;color:#626262;font-weight:normal;">Pesos</div>
<div class="t" style="left:1118.80px;top:417.10px;font-size:9.45px;color:#626262;font-weight:normal;">01-01-2026</div>
<div class="t" style="left:1198.90px;top:417.10px;font-size:9.45px;color:#626262;font-weight:normal;">12-31-2026</div>
<div class="t" style="left:1279.30px;top:417.10px;font-size:9.45px;color:#626262;font-weight:normal;">Activo</div>
<div class="b" style="left:7.90px;top:433.00px;width:1321.50px;height:20.00px;background:#d4d4d4;border-bottom:1px solid #c3c3c3;"></div>
<div class="b" style="left:31.00px;top:433.00px;width:1.00px;height:20.00px;border-left:1px dashed #bdbdbd;"></div>
<div class="b" style="left:110.90px;top:433.00px;width:1.00px;height:20.00px;border-left:1px dashed #bdbdbd;"></div>
<div class="b" style="left:258.00px;top:433.00px;width:1.00px;height:20.00px;border-left:1px dashed #bdbdbd;"></div>
<div class="b" style="left:767.20px;top:433.00px;width:1.00px;height:20.00px;border-left:1px dashed #bdbdbd;"></div>
<div class="b" style="left:927.80px;top:433.00px;width:1.00px;height:20.00px;border-left:1px dashed #bdbdbd;"></div>
<div class="b" style="left:1001.00px;top:433.00px;width:1.00px;height:20.00px;border-left:1px dashed #bdbdbd;"></div>
<div class="b" style="left:1115.00px;top:433.00px;width:1.00px;height:20.00px;border-left:1px dashed #bdbdbd;"></div>
<div class="b" style="left:1194.90px;top:433.00px;width:1.00px;height:20.00px;border-left:1px dashed #bdbdbd;"></div>
<div class="b" style="left:1276.00px;top:433.00px;width:1.00px;height:20.00px;border-left:1px dashed #bdbdbd;"></div>
<div class="b" style="left:1328.90px;top:433.00px;width:1.00px;height:20.00px;border-left:1px dashed #bdbdbd;"></div>
<div class="b" style="left:12.6px;top:434.7px;width:14.5px;height:14.5px;background:#cfd8dc;border-radius:2px;"></div><svg class="b" style="left:12.6px;top:434.7px" width="15" height="15" viewBox="0 0 15 15"><rect x="1.6" y="1.8" width="9.4" height="11.8" fill="#dcdcdc" stroke="#b4b4b4" stroke-width="0.8"/><path d="M1.4 13.9 H11.2" stroke="#9c9c9c" stroke-width="0.9"/><path d="M3.1 10.9 L3.93 8.01 L10.93 1.71 L13.07 4.09 L6.07 10.39 Z" fill="#e2bf48" stroke="#b8962e" stroke-width="0.5"/><path d="M5 9.2 L12 2.9" stroke="#c49a2a" stroke-width="0.6" stroke-dasharray="1 0.8"/><path d="M3.1 10.9 L3.55 9.35 L4.65 10.35 Z" fill="#333"/><circle cx="12.1" cy="2.9" r="2.3" fill="#d9605c"/></svg>
<div class="t" style="left:31.50px;width:76.50px;top:437.10px;font-size:9.45px;color:#626262;font-weight:normal;text-align:right">010204</div>
<div class="t" style="left:114.80px;top:437.09px;font-size:9.46px;color:#626262;font-weight:normal;">Procedimiento Qx</div>
<div class="t" style="left:262.20px;top:437.65px;font-size:8.8px;color:#626262;font-weight:normal;">PUNCION (ASPIRACION DE LIQUIDO) VENTRICULAR VIA TRANSFONTANELAR</div>
<div class="t" style="left:770.60px;top:437.57px;font-size:8.9px;color:#626262;font-weight:normal;">SISTEMA NERVIOSO</div>
<div class="t" style="left:928.30px;width:70.00px;top:437.10px;font-size:9.45px;color:#626262;font-weight:normal;text-align:right">1</div>
<div class="t" style="left:1005.50px;top:437.10px;font-size:9.45px;color:#626262;font-weight:normal;">Pesos</div>
<div class="t" style="left:1118.80px;top:437.10px;font-size:9.45px;color:#626262;font-weight:normal;">01-01-2026</div>
<div class="t" style="left:1198.90px;top:437.10px;font-size:9.45px;color:#626262;font-weight:normal;">12-31-2026</div>
<div class="t" style="left:1279.30px;top:437.10px;font-size:9.45px;color:#626262;font-weight:normal;">Activo</div>
<div class="b" style="left:7.90px;top:453.00px;width:1321.50px;height:21.00px;background:#cdd0d3;border-bottom:1px solid #c3c3c3;"></div>
<div class="b" style="left:31.00px;top:453.00px;width:1.00px;height:21.00px;border-left:1px dashed #bdbdbd;"></div>
<div class="b" style="left:110.90px;top:453.00px;width:1.00px;height:21.00px;border-left:1px dashed #bdbdbd;"></div>
<div class="b" style="left:258.00px;top:453.00px;width:1.00px;height:21.00px;border-left:1px dashed #bdbdbd;"></div>
<div class="b" style="left:767.20px;top:453.00px;width:1.00px;height:21.00px;border-left:1px dashed #bdbdbd;"></div>
<div class="b" style="left:927.80px;top:453.00px;width:1.00px;height:21.00px;border-left:1px dashed #bdbdbd;"></div>
<div class="b" style="left:1001.00px;top:453.00px;width:1.00px;height:21.00px;border-left:1px dashed #bdbdbd;"></div>
<div class="b" style="left:1115.00px;top:453.00px;width:1.00px;height:21.00px;border-left:1px dashed #bdbdbd;"></div>
<div class="b" style="left:1194.90px;top:453.00px;width:1.00px;height:21.00px;border-left:1px dashed #bdbdbd;"></div>
<div class="b" style="left:1276.00px;top:453.00px;width:1.00px;height:21.00px;border-left:1px dashed #bdbdbd;"></div>
<div class="b" style="left:1328.90px;top:453.00px;width:1.00px;height:21.00px;border-left:1px dashed #bdbdbd;"></div>
<div class="b" style="left:12.6px;top:455.7px;width:14.5px;height:14.5px;background:#cfd8dc;border-radius:2px;"></div><svg class="b" style="left:12.6px;top:455.7px" width="15" height="15" viewBox="0 0 15 15"><rect x="1.6" y="1.8" width="9.4" height="11.8" fill="#dcdcdc" stroke="#b4b4b4" stroke-width="0.8"/><path d="M1.4 13.9 H11.2" stroke="#9c9c9c" stroke-width="0.9"/><path d="M3.1 10.9 L3.93 8.01 L10.93 1.71 L13.07 4.09 L6.07 10.39 Z" fill="#e2bf48" stroke="#b8962e" stroke-width="0.5"/><path d="M5 9.2 L12 2.9" stroke="#c49a2a" stroke-width="0.6" stroke-dasharray="1 0.8"/><path d="M3.1 10.9 L3.55 9.35 L4.65 10.35 Z" fill="#333"/><circle cx="12.1" cy="2.9" r="2.3" fill="#d9605c"/></svg>
<div class="t" style="left:31.50px;width:76.50px;top:457.10px;font-size:9.45px;color:#626262;font-weight:normal;text-align:right">010205</div>
<div class="t" style="left:114.80px;top:457.09px;font-size:9.46px;color:#626262;font-weight:normal;">Procedimiento Qx</div>
<div class="t" style="left:262.20px;top:457.65px;font-size:8.8px;color:#626262;font-weight:normal;">PUNCION (ASPIRACION DE LIQUIDO) VENTRICULAR</div>
<div class="t" style="left:770.60px;top:457.57px;font-size:8.9px;color:#626262;font-weight:normal;">SISTEMA NERVIOSO</div>
<div class="t" style="left:928.30px;width:70.00px;top:457.10px;font-size:9.45px;color:#626262;font-weight:normal;text-align:right">1</div>
<div class="t" style="left:1005.50px;top:457.10px;font-size:9.45px;color:#626262;font-weight:normal;">Pesos</div>
<div class="t" style="left:1118.80px;top:457.10px;font-size:9.45px;color:#626262;font-weight:normal;">01-01-2026</div>
<div class="t" style="left:1198.90px;top:457.10px;font-size:9.45px;color:#626262;font-weight:normal;">12-31-2026</div>
<div class="t" style="left:1279.30px;top:457.10px;font-size:9.45px;color:#626262;font-weight:normal;">Activo</div>
<div class="b" style="left:7.90px;top:474.00px;width:1321.50px;height:20.00px;background:#d4d4d4;border-bottom:1px solid #c3c3c3;"></div>
<div class="b" style="left:31.00px;top:474.00px;width:1.00px;height:20.00px;border-left:1px dashed #bdbdbd;"></div>
<div class="b" style="left:110.90px;top:474.00px;width:1.00px;height:20.00px;border-left:1px dashed #bdbdbd;"></div>
<div class="b" style="left:258.00px;top:474.00px;width:1.00px;height:20.00px;border-left:1px dashed #bdbdbd;"></div>
<div class="b" style="left:767.20px;top:474.00px;width:1.00px;height:20.00px;border-left:1px dashed #bdbdbd;"></div>
<div class="b" style="left:927.80px;top:474.00px;width:1.00px;height:20.00px;border-left:1px dashed #bdbdbd;"></div>
<div class="b" style="left:1001.00px;top:474.00px;width:1.00px;height:20.00px;border-left:1px dashed #bdbdbd;"></div>
<div class="b" style="left:1115.00px;top:474.00px;width:1.00px;height:20.00px;border-left:1px dashed #bdbdbd;"></div>
<div class="b" style="left:1194.90px;top:474.00px;width:1.00px;height:20.00px;border-left:1px dashed #bdbdbd;"></div>
<div class="b" style="left:1276.00px;top:474.00px;width:1.00px;height:20.00px;border-left:1px dashed #bdbdbd;"></div>
<div class="b" style="left:1328.90px;top:474.00px;width:1.00px;height:20.00px;border-left:1px dashed #bdbdbd;"></div>
<div class="b" style="left:12.6px;top:475.7px;width:14.5px;height:14.5px;background:#cfd8dc;border-radius:2px;"></div><svg class="b" style="left:12.6px;top:475.7px" width="15" height="15" viewBox="0 0 15 15"><rect x="1.6" y="1.8" width="9.4" height="11.8" fill="#dcdcdc" stroke="#b4b4b4" stroke-width="0.8"/><path d="M1.4 13.9 H11.2" stroke="#9c9c9c" stroke-width="0.9"/><path d="M3.1 10.9 L3.93 8.01 L10.93 1.71 L13.07 4.09 L6.07 10.39 Z" fill="#e2bf48" stroke="#b8962e" stroke-width="0.5"/><path d="M5 9.2 L12 2.9" stroke="#c49a2a" stroke-width="0.6" stroke-dasharray="1 0.8"/><path d="M3.1 10.9 L3.55 9.35 L4.65 10.35 Z" fill="#333"/><circle cx="12.1" cy="2.9" r="2.3" fill="#d9605c"/></svg>
<div class="t" style="left:31.50px;width:76.50px;top:478.10px;font-size:9.45px;color:#626262;font-weight:normal;text-align:right">010901</div>
<div class="t" style="left:114.80px;top:478.09px;font-size:9.46px;color:#626262;font-weight:normal;">Procedimiento Qx</div>
<div class="t" style="left:262.20px;top:478.65px;font-size:8.8px;color:#626262;font-weight:normal;">PUNCION SUBDURAL</div>
<div class="t" style="left:770.60px;top:478.57px;font-size:8.9px;color:#626262;font-weight:normal;">SISTEMA NERVIOSO</div>
<div class="t" style="left:928.30px;width:70.00px;top:478.10px;font-size:9.45px;color:#626262;font-weight:normal;text-align:right">1</div>
<div class="t" style="left:1005.50px;top:478.10px;font-size:9.45px;color:#626262;font-weight:normal;">Pesos</div>
<div class="t" style="left:1118.80px;top:478.10px;font-size:9.45px;color:#626262;font-weight:normal;">01-01-2026</div>
<div class="t" style="left:1198.90px;top:478.10px;font-size:9.45px;color:#626262;font-weight:normal;">12-31-2026</div>
<div class="t" style="left:1279.30px;top:478.10px;font-size:9.45px;color:#626262;font-weight:normal;">Activo</div>
<div class="b" style="left:7.90px;top:494.00px;width:1321.50px;height:20.00px;background:#cdd0d3;border-bottom:1px solid #c3c3c3;"></div>
<div class="b" style="left:31.00px;top:494.00px;width:1.00px;height:20.00px;border-left:1px dashed #bdbdbd;"></div>
<div class="b" style="left:110.90px;top:494.00px;width:1.00px;height:20.00px;border-left:1px dashed #bdbdbd;"></div>
<div class="b" style="left:258.00px;top:494.00px;width:1.00px;height:20.00px;border-left:1px dashed #bdbdbd;"></div>
<div class="b" style="left:767.20px;top:494.00px;width:1.00px;height:20.00px;border-left:1px dashed #bdbdbd;"></div>
<div class="b" style="left:927.80px;top:494.00px;width:1.00px;height:20.00px;border-left:1px dashed #bdbdbd;"></div>
<div class="b" style="left:1001.00px;top:494.00px;width:1.00px;height:20.00px;border-left:1px dashed #bdbdbd;"></div>
<div class="b" style="left:1115.00px;top:494.00px;width:1.00px;height:20.00px;border-left:1px dashed #bdbdbd;"></div>
<div class="b" style="left:1194.90px;top:494.00px;width:1.00px;height:20.00px;border-left:1px dashed #bdbdbd;"></div>
<div class="b" style="left:1276.00px;top:494.00px;width:1.00px;height:20.00px;border-left:1px dashed #bdbdbd;"></div>
<div class="b" style="left:1328.90px;top:494.00px;width:1.00px;height:20.00px;border-left:1px dashed #bdbdbd;"></div>
<div class="b" style="left:12.6px;top:495.7px;width:14.5px;height:14.5px;background:#cfd8dc;border-radius:2px;"></div><svg class="b" style="left:12.6px;top:495.7px" width="15" height="15" viewBox="0 0 15 15"><rect x="1.6" y="1.8" width="9.4" height="11.8" fill="#dcdcdc" stroke="#b4b4b4" stroke-width="0.8"/><path d="M1.4 13.9 H11.2" stroke="#9c9c9c" stroke-width="0.9"/><path d="M3.1 10.9 L3.93 8.01 L10.93 1.71 L13.07 4.09 L6.07 10.39 Z" fill="#e2bf48" stroke="#b8962e" stroke-width="0.5"/><path d="M5 9.2 L12 2.9" stroke="#c49a2a" stroke-width="0.6" stroke-dasharray="1 0.8"/><path d="M3.1 10.9 L3.55 9.35 L4.65 10.35 Z" fill="#333"/><circle cx="12.1" cy="2.9" r="2.3" fill="#d9605c"/></svg>
<div class="t" style="left:31.50px;width:76.50px;top:498.10px;font-size:9.45px;color:#626262;font-weight:normal;text-align:right">010902</div>
<div class="t" style="left:114.80px;top:498.09px;font-size:9.46px;color:#626262;font-weight:normal;">Procedimiento Qx</div>
<div class="t" style="left:262.20px;top:498.65px;font-size:8.8px;color:#626262;font-weight:normal;">OTRA PUNCION CRANEAL</div>
<div class="t" style="left:770.60px;top:498.57px;font-size:8.9px;color:#626262;font-weight:normal;">SISTEMA NERVIOSO</div>
<div class="t" style="left:928.30px;width:70.00px;top:498.10px;font-size:9.45px;color:#626262;font-weight:normal;text-align:right">1</div>
<div class="t" style="left:1005.50px;top:498.10px;font-size:9.45px;color:#626262;font-weight:normal;">Pesos</div>
<div class="t" style="left:1118.80px;top:498.10px;font-size:9.45px;color:#626262;font-weight:normal;">01-01-2026</div>
<div class="t" style="left:1198.90px;top:498.10px;font-size:9.45px;color:#626262;font-weight:normal;">12-31-2026</div>
<div class="t" style="left:1279.30px;top:498.10px;font-size:9.45px;color:#626262;font-weight:normal;">Activo</div>
<div class="b" style="left:7.90px;top:514.00px;width:1321.50px;height:20.00px;background:#d4d4d4;border-bottom:1px solid #c3c3c3;"></div>
<div class="b" style="left:31.00px;top:514.00px;width:1.00px;height:20.00px;border-left:1px dashed #bdbdbd;"></div>
<div class="b" style="left:110.90px;top:514.00px;width:1.00px;height:20.00px;border-left:1px dashed #bdbdbd;"></div>
<div class="b" style="left:258.00px;top:514.00px;width:1.00px;height:20.00px;border-left:1px dashed #bdbdbd;"></div>
<div class="b" style="left:767.20px;top:514.00px;width:1.00px;height:20.00px;border-left:1px dashed #bdbdbd;"></div>
<div class="b" style="left:927.80px;top:514.00px;width:1.00px;height:20.00px;border-left:1px dashed #bdbdbd;"></div>
<div class="b" style="left:1001.00px;top:514.00px;width:1.00px;height:20.00px;border-left:1px dashed #bdbdbd;"></div>
<div class="b" style="left:1115.00px;top:514.00px;width:1.00px;height:20.00px;border-left:1px dashed #bdbdbd;"></div>
<div class="b" style="left:1194.90px;top:514.00px;width:1.00px;height:20.00px;border-left:1px dashed #bdbdbd;"></div>
<div class="b" style="left:1276.00px;top:514.00px;width:1.00px;height:20.00px;border-left:1px dashed #bdbdbd;"></div>
<div class="b" style="left:1328.90px;top:514.00px;width:1.00px;height:20.00px;border-left:1px dashed #bdbdbd;"></div>
<div class="b" style="left:12.6px;top:515.7px;width:14.5px;height:14.5px;background:#cfd8dc;border-radius:2px;"></div><svg class="b" style="left:12.6px;top:515.7px" width="15" height="15" viewBox="0 0 15 15"><rect x="1.6" y="1.8" width="9.4" height="11.8" fill="#dcdcdc" stroke="#b4b4b4" stroke-width="0.8"/><path d="M1.4 13.9 H11.2" stroke="#9c9c9c" stroke-width="0.9"/><path d="M3.1 10.9 L3.93 8.01 L10.93 1.71 L13.07 4.09 L6.07 10.39 Z" fill="#e2bf48" stroke="#b8962e" stroke-width="0.5"/><path d="M5 9.2 L12 2.9" stroke="#c49a2a" stroke-width="0.6" stroke-dasharray="1 0.8"/><path d="M3.1 10.9 L3.55 9.35 L4.65 10.35 Z" fill="#333"/><circle cx="12.1" cy="2.9" r="2.3" fill="#d9605c"/></svg>
<div class="t" style="left:31.50px;width:76.50px;top:518.10px;font-size:9.45px;color:#626262;font-weight:normal;text-align:right">011101</div>
<div class="t" style="left:114.80px;top:518.09px;font-size:9.46px;color:#626262;font-weight:normal;">Procedimiento Qx</div>
<div class="t" style="left:262.20px;top:518.65px;font-size:8.8px;color:#626262;font-weight:normal;">BIOPSIA OSEA EN CRANEO POR CRANEOTOMIA</div>
<div class="t" style="left:770.60px;top:518.57px;font-size:8.9px;color:#626262;font-weight:normal;">SISTEMA NERVIOSO</div>
<div class="t" style="left:928.30px;width:70.00px;top:518.10px;font-size:9.45px;color:#626262;font-weight:normal;text-align:right">1</div>
<div class="t" style="left:1005.50px;top:518.10px;font-size:9.45px;color:#626262;font-weight:normal;">Pesos</div>
<div class="t" style="left:1118.80px;top:518.10px;font-size:9.45px;color:#626262;font-weight:normal;">01-01-2026</div>
<div class="t" style="left:1198.90px;top:518.10px;font-size:9.45px;color:#626262;font-weight:normal;">12-31-2026</div>
<div class="t" style="left:1279.30px;top:518.10px;font-size:9.45px;color:#626262;font-weight:normal;">Activo</div>
<div class="b" style="left:7.90px;top:534.00px;width:1321.50px;height:20.00px;background:#cdd0d3;border-bottom:1px solid #c3c3c3;"></div>
<div class="b" style="left:31.00px;top:534.00px;width:1.00px;height:20.00px;border-left:1px dashed #bdbdbd;"></div>
<div class="b" style="left:110.90px;top:534.00px;width:1.00px;height:20.00px;border-left:1px dashed #bdbdbd;"></div>
<div class="b" style="left:258.00px;top:534.00px;width:1.00px;height:20.00px;border-left:1px dashed #bdbdbd;"></div>
<div class="b" style="left:767.20px;top:534.00px;width:1.00px;height:20.00px;border-left:1px dashed #bdbdbd;"></div>
<div class="b" style="left:927.80px;top:534.00px;width:1.00px;height:20.00px;border-left:1px dashed #bdbdbd;"></div>
<div class="b" style="left:1001.00px;top:534.00px;width:1.00px;height:20.00px;border-left:1px dashed #bdbdbd;"></div>
<div class="b" style="left:1115.00px;top:534.00px;width:1.00px;height:20.00px;border-left:1px dashed #bdbdbd;"></div>
<div class="b" style="left:1194.90px;top:534.00px;width:1.00px;height:20.00px;border-left:1px dashed #bdbdbd;"></div>
<div class="b" style="left:1276.00px;top:534.00px;width:1.00px;height:20.00px;border-left:1px dashed #bdbdbd;"></div>
<div class="b" style="left:1328.90px;top:534.00px;width:1.00px;height:20.00px;border-left:1px dashed #bdbdbd;"></div>
<div class="b" style="left:12.6px;top:535.7px;width:14.5px;height:14.5px;background:#cfd8dc;border-radius:2px;"></div><svg class="b" style="left:12.6px;top:535.7px" width="15" height="15" viewBox="0 0 15 15"><rect x="1.6" y="1.8" width="9.4" height="11.8" fill="#dcdcdc" stroke="#b4b4b4" stroke-width="0.8"/><path d="M1.4 13.9 H11.2" stroke="#9c9c9c" stroke-width="0.9"/><path d="M3.1 10.9 L3.93 8.01 L10.93 1.71 L13.07 4.09 L6.07 10.39 Z" fill="#e2bf48" stroke="#b8962e" stroke-width="0.5"/><path d="M5 9.2 L12 2.9" stroke="#c49a2a" stroke-width="0.6" stroke-dasharray="1 0.8"/><path d="M3.1 10.9 L3.55 9.35 L4.65 10.35 Z" fill="#333"/><circle cx="12.1" cy="2.9" r="2.3" fill="#d9605c"/></svg>
<div class="t" style="left:31.50px;width:76.50px;top:538.10px;font-size:9.45px;color:#626262;font-weight:normal;text-align:right">011102</div>
<div class="t" style="left:114.80px;top:538.09px;font-size:9.46px;color:#626262;font-weight:normal;">Procedimiento Qx</div>
<div class="t" style="left:262.20px;top:538.65px;font-size:8.8px;color:#626262;font-weight:normal;">BIOPSIA OSEA EN CRANEO POR CRANIECTOMIA</div>
<div class="t" style="left:770.60px;top:538.57px;font-size:8.9px;color:#626262;font-weight:normal;">SISTEMA NERVIOSO</div>
<div class="t" style="left:928.30px;width:70.00px;top:538.10px;font-size:9.45px;color:#626262;font-weight:normal;text-align:right">1</div>
<div class="t" style="left:1005.50px;top:538.10px;font-size:9.45px;color:#626262;font-weight:normal;">Pesos</div>
<div class="t" style="left:1118.80px;top:538.10px;font-size:9.45px;color:#626262;font-weight:normal;">01-01-2026</div>
<div class="t" style="left:1198.90px;top:538.10px;font-size:9.45px;color:#626262;font-weight:normal;">12-31-2026</div>
<div class="t" style="left:1279.30px;top:538.10px;font-size:9.45px;color:#626262;font-weight:normal;">Activo</div>
<div class="b" style="left:7.90px;top:554.00px;width:1321.50px;height:20.00px;background:#d4d4d4;border-bottom:1px solid #c3c3c3;"></div>
<div class="b" style="left:31.00px;top:554.00px;width:1.00px;height:20.00px;border-left:1px dashed #bdbdbd;"></div>
<div class="b" style="left:110.90px;top:554.00px;width:1.00px;height:20.00px;border-left:1px dashed #bdbdbd;"></div>
<div class="b" style="left:258.00px;top:554.00px;width:1.00px;height:20.00px;border-left:1px dashed #bdbdbd;"></div>
<div class="b" style="left:767.20px;top:554.00px;width:1.00px;height:20.00px;border-left:1px dashed #bdbdbd;"></div>
<div class="b" style="left:927.80px;top:554.00px;width:1.00px;height:20.00px;border-left:1px dashed #bdbdbd;"></div>
<div class="b" style="left:1001.00px;top:554.00px;width:1.00px;height:20.00px;border-left:1px dashed #bdbdbd;"></div>
<div class="b" style="left:1115.00px;top:554.00px;width:1.00px;height:20.00px;border-left:1px dashed #bdbdbd;"></div>
<div class="b" style="left:1194.90px;top:554.00px;width:1.00px;height:20.00px;border-left:1px dashed #bdbdbd;"></div>
<div class="b" style="left:1276.00px;top:554.00px;width:1.00px;height:20.00px;border-left:1px dashed #bdbdbd;"></div>
<div class="b" style="left:1328.90px;top:554.00px;width:1.00px;height:20.00px;border-left:1px dashed #bdbdbd;"></div>
<div class="b" style="left:12.6px;top:555.7px;width:14.5px;height:14.5px;background:#cfd8dc;border-radius:2px;"></div><svg class="b" style="left:12.6px;top:555.7px" width="15" height="15" viewBox="0 0 15 15"><rect x="1.6" y="1.8" width="9.4" height="11.8" fill="#dcdcdc" stroke="#b4b4b4" stroke-width="0.8"/><path d="M1.4 13.9 H11.2" stroke="#9c9c9c" stroke-width="0.9"/><path d="M3.1 10.9 L3.93 8.01 L10.93 1.71 L13.07 4.09 L6.07 10.39 Z" fill="#e2bf48" stroke="#b8962e" stroke-width="0.5"/><path d="M5 9.2 L12 2.9" stroke="#c49a2a" stroke-width="0.6" stroke-dasharray="1 0.8"/><path d="M3.1 10.9 L3.55 9.35 L4.65 10.35 Z" fill="#333"/><circle cx="12.1" cy="2.9" r="2.3" fill="#d9605c"/></svg>
<div class="t" style="left:31.50px;width:76.50px;top:558.10px;font-size:9.45px;color:#626262;font-weight:normal;text-align:right">011103</div>
<div class="t" style="left:114.80px;top:558.09px;font-size:9.46px;color:#626262;font-weight:normal;">Procedimiento Qx</div>
<div class="t" style="left:262.20px;top:558.65px;font-size:8.8px;color:#626262;font-weight:normal;">BIOPSIA DE CRANEO</div>
<div class="t" style="left:770.60px;top:558.57px;font-size:8.9px;color:#626262;font-weight:normal;">SISTEMA NERVIOSO</div>
<div class="t" style="left:928.30px;width:70.00px;top:558.10px;font-size:9.45px;color:#626262;font-weight:normal;text-align:right">1</div>
<div class="t" style="left:1005.50px;top:558.10px;font-size:9.45px;color:#626262;font-weight:normal;">Pesos</div>
<div class="t" style="left:1118.80px;top:558.10px;font-size:9.45px;color:#626262;font-weight:normal;">01-01-2026</div>
<div class="t" style="left:1198.90px;top:558.10px;font-size:9.45px;color:#626262;font-weight:normal;">12-31-2026</div>
<div class="t" style="left:1279.30px;top:558.10px;font-size:9.45px;color:#626262;font-weight:normal;">Activo</div>
<div class="b" style="left:7.90px;top:574.00px;width:1321.50px;height:20.00px;background:#cdd0d3;border-bottom:1px solid #c3c3c3;"></div>
<div class="b" style="left:31.00px;top:574.00px;width:1.00px;height:20.00px;border-left:1px dashed #bdbdbd;"></div>
<div class="b" style="left:110.90px;top:574.00px;width:1.00px;height:20.00px;border-left:1px dashed #bdbdbd;"></div>
<div class="b" style="left:258.00px;top:574.00px;width:1.00px;height:20.00px;border-left:1px dashed #bdbdbd;"></div>
<div class="b" style="left:767.20px;top:574.00px;width:1.00px;height:20.00px;border-left:1px dashed #bdbdbd;"></div>
<div class="b" style="left:927.80px;top:574.00px;width:1.00px;height:20.00px;border-left:1px dashed #bdbdbd;"></div>
<div class="b" style="left:1001.00px;top:574.00px;width:1.00px;height:20.00px;border-left:1px dashed #bdbdbd;"></div>
<div class="b" style="left:1115.00px;top:574.00px;width:1.00px;height:20.00px;border-left:1px dashed #bdbdbd;"></div>
<div class="b" style="left:1194.90px;top:574.00px;width:1.00px;height:20.00px;border-left:1px dashed #bdbdbd;"></div>
<div class="b" style="left:1276.00px;top:574.00px;width:1.00px;height:20.00px;border-left:1px dashed #bdbdbd;"></div>
<div class="b" style="left:1328.90px;top:574.00px;width:1.00px;height:20.00px;border-left:1px dashed #bdbdbd;"></div>
<div class="b" style="left:12.6px;top:575.7px;width:14.5px;height:14.5px;background:#cfd8dc;border-radius:2px;"></div><svg class="b" style="left:12.6px;top:575.7px" width="15" height="15" viewBox="0 0 15 15"><rect x="1.6" y="1.8" width="9.4" height="11.8" fill="#dcdcdc" stroke="#b4b4b4" stroke-width="0.8"/><path d="M1.4 13.9 H11.2" stroke="#9c9c9c" stroke-width="0.9"/><path d="M3.1 10.9 L3.93 8.01 L10.93 1.71 L13.07 4.09 L6.07 10.39 Z" fill="#e2bf48" stroke="#b8962e" stroke-width="0.5"/><path d="M5 9.2 L12 2.9" stroke="#c49a2a" stroke-width="0.6" stroke-dasharray="1 0.8"/><path d="M3.1 10.9 L3.55 9.35 L4.65 10.35 Z" fill="#333"/><circle cx="12.1" cy="2.9" r="2.3" fill="#d9605c"/></svg>
<div class="t" style="left:31.50px;width:76.50px;top:578.10px;font-size:9.45px;color:#626262;font-weight:normal;text-align:right">011201</div>
<div class="t" style="left:114.80px;top:578.09px;font-size:9.46px;color:#626262;font-weight:normal;">Procedimiento Qx</div>
<div class="t" style="left:262.20px;top:578.65px;font-size:8.8px;color:#626262;font-weight:normal;">BIOPSIA DE MENINGE POR CRANEOTOMIA</div>
<div class="t" style="left:770.60px;top:578.57px;font-size:8.9px;color:#626262;font-weight:normal;">SISTEMA NERVIOSO</div>
<div class="t" style="left:928.30px;width:70.00px;top:578.10px;font-size:9.45px;color:#626262;font-weight:normal;text-align:right">1</div>
<div class="t" style="left:1005.50px;top:578.10px;font-size:9.45px;color:#626262;font-weight:normal;">Pesos</div>
<div class="t" style="left:1118.80px;top:578.10px;font-size:9.45px;color:#626262;font-weight:normal;">01-01-2026</div>
<div class="t" style="left:1198.90px;top:578.10px;font-size:9.45px;color:#626262;font-weight:normal;">12-31-2026</div>
<div class="t" style="left:1279.30px;top:578.10px;font-size:9.45px;color:#626262;font-weight:normal;">Activo</div>
<svg class="b" style="left:1343px;top:49.5px" width="9" height="7"><path d="M0.5 6.5 L4.5 0.5 L8.5 6.5 Z" fill="#8e8e8e"/></svg>
<div class="b" style="left:1343.00px;top:61.80px;width:9.20px;height:216.00px;background:#9b9b9b;border-radius:5px;"></div>
<svg class="b" style="left:1343px;top:582.5px" width="9" height="7"><path d="M0.5 0.5 L4.5 6.5 L8.5 0.5 Z" fill="#8e8e8e"/></svg>
<div class="b" style="left:-10.00px;top:0.00px;width:1374.00px;height:44.00px;background:#1c7fe0;box-shadow:0 2px 5px rgba(0,0,0,0.45);"></div>
<div class="b" style="left:18.10px;top:15.90px;width:14.80px;height:1.60px;background:#fff;"></div>
<div class="b" style="left:18.10px;top:19.90px;width:14.80px;height:1.60px;background:#fff;"></div>
<div class="b" style="left:18.10px;top:23.90px;width:14.80px;height:1.60px;background:#fff;"></div>
<svg class="b" style="left:54px;top:0" width="50" height="32"><path d="M12.7 27.1 A6.4 6.4 0 0 1 9.2 14.6 A7.4 7.4 0 0 1 23.8 9.6 A6.2 6.2 0 0 1 35.5 11.6" fill="none" stroke="#fff" stroke-width="1.9" stroke-linecap="round"/></svg>
<div class="t" style="left:70.30px;top:11.44px;font-size:19.8px;color:#fff;font-weight:bold;letter-spacing:0.9px;-webkit-text-stroke:0.7px #fff;">iMedical</div>
<div class="t" style="left:98.80px;top:29.55px;font-size:6.2px;color:#fff;font-weight:normal;font-style:italic;-webkit-text-stroke:0.25px #fff;">Tecnologia en salud</div>
<div class="t" style="left:172.60px;top:14.00px;font-size:13.7px;color:#fff;font-weight:bold;transform:scaleX(0.865);transform-origin:0 0;">CONFIGURACION</div>
<div class="t" style="left:281.80px;top:14.00px;font-size:13.7px;color:#fff;font-weight:bold;transform:scaleX(0.865);transform-origin:0 0;">/</div>
<div class="t" style="left:292.20px;top:14.00px;font-size:13.7px;color:#fff;font-weight:bold;transform:scaleX(0.865);transform-origin:0 0;">FACTURACION</div>
<div class="t" style="left:385.20px;top:14.00px;font-size:13.7px;color:#fff;font-weight:bold;transform:scaleX(0.865);transform-origin:0 0;">/</div>
<div class="t" style="left:396.60px;top:14.00px;font-size:13.7px;color:#fff;font-weight:bold;transform:scaleX(0.865);transform-origin:0 0;">MANUALES TARIFARIOS</div>
<div class="b" style="left:287.00px;top:219.30px;width:776.00px;height:198.70px;border:1px solid #8a8a8a;border-radius:4px;background:linear-gradient(#ffffff,#ececec 20px,#f0f0f0);"></div>
<svg class="b" style="left:294px;top:225px" width="14" height="14" viewBox="0 0 14 14"><rect x="0.6" y="0.6" width="12.4" height="12.4" rx="1.5" fill="#fff" stroke="#2f6b2f" stroke-width="1.1"/><rect x="1" y="1" width="11.6" height="2.6" fill="#3aa23a"/><rect x="2.5" y="5.5" width="8.5" height="2" fill="#6aa86a"/><rect x="2.5" y="8.6" width="4.5" height="1" fill="#3a8a3a"/></svg>
<div class="t" style="left:312.00px;top:226.68px;font-size:9.83px;color:#1a1a1a;font-weight:normal;-webkit-text-stroke:0.2px #1a1a1a;">Descargar Plantilla Excel</div>
<div class="b" style="left:1040.80px;top:229.00px;width:10.40px;height:9.20px;background:linear-gradient(#8a8a8a,#666);border-radius:2px;"></div>
<svg class="b" style="left:1040.8px;top:229px" width="11" height="10"><path d="M3.2 2.6 L7.6 7 M7.6 2.6 L3.2 7" stroke="#fff" stroke-width="1"/></svg>
<div class="b" style="left:292.00px;top:242.40px;width:767.00px;height:172.40px;border:1px solid #9c9c9c;background:#fff;"></div>
<div class="b" style="left:293.50px;top:243.40px;width:764.50px;height:1.00px;border-top:1px dashed #e6ecf0;"></div>
<div class="b" style="left:299.00px;top:255.40px;width:755.00px;height:45.40px;border:1px solid #cfcfcf;border-radius:4px;background:#fcfcfc;"></div>
<div class="b" style="left:305.00px;top:248.90px;width:121.80px;height:13.80px;background:linear-gradient(#444,#222);border-radius:5px;"></div>
<div class="t" style="left:313.70px;top:250.84px;font-size:9.88px;color:#ccff33;font-weight:bold;transform:scaleX(0.893);transform-origin:0 0;-webkit-text-stroke:0.15px #ccff33;">Descargar Plantilla Excel</div>
<div class="t" style="left:306.60px;top:268.71px;font-size:8.85px;color:#111;font-weight:bold;">Tarifas Origen (Productos)</div>
<div class="t" style="left:617.20px;top:268.70px;font-size:8.86px;color:#111;font-weight:bold;">Vigencias Tarifarias Origen</div>
<div class="b" style="left:305.00px;top:278.30px;width:296.80px;height:17.50px;border:1px solid #c5d3e3;border-radius:3px;background:linear-gradient(#f2f6fb 0,#eaf0f8 50%,#dde7f3 50%,#dde7f3 100%);"></div>
<svg class="b" style="left:591.8px;top:284.8px" width="6" height="4"><path d="M0 0 H5.4 L2.7 3.7 Z" fill="#1e3a66"/></svg>
<div class="t" style="left:309.50px;top:281.99px;font-size:9.46px;color:#2a4470;font-weight:normal;">Seleccione</div>
<div class="b" style="left:617.20px;top:278.30px;width:296.80px;height:17.50px;border:1px solid #c5d3e3;border-radius:3px;background:linear-gradient(#f2f6fb 0,#eaf0f8 50%,#dde7f3 50%,#dde7f3 100%);"></div>
<svg class="b" style="left:904px;top:284.8px" width="6" height="4"><path d="M0 0 H5.4 L2.7 3.7 Z" fill="#1e3a66"/></svg>
<div class="b" style="left:919.00px;top:267.00px;width:119.00px;height:37.00px;border:4px solid #ff0000;"></div>
<div class="b" style="left:928.20px;top:278.30px;width:101.70px;height:15.50px;border:1px solid #707070;border-radius:2px;background:linear-gradient(#f6f6f6,#dedede);"></div>
<div class="t" style="left:934.90px;top:280.96px;font-size:10.56px;color:#000;font-weight:normal;">Descargar Plantilla</div>

</body></html>
